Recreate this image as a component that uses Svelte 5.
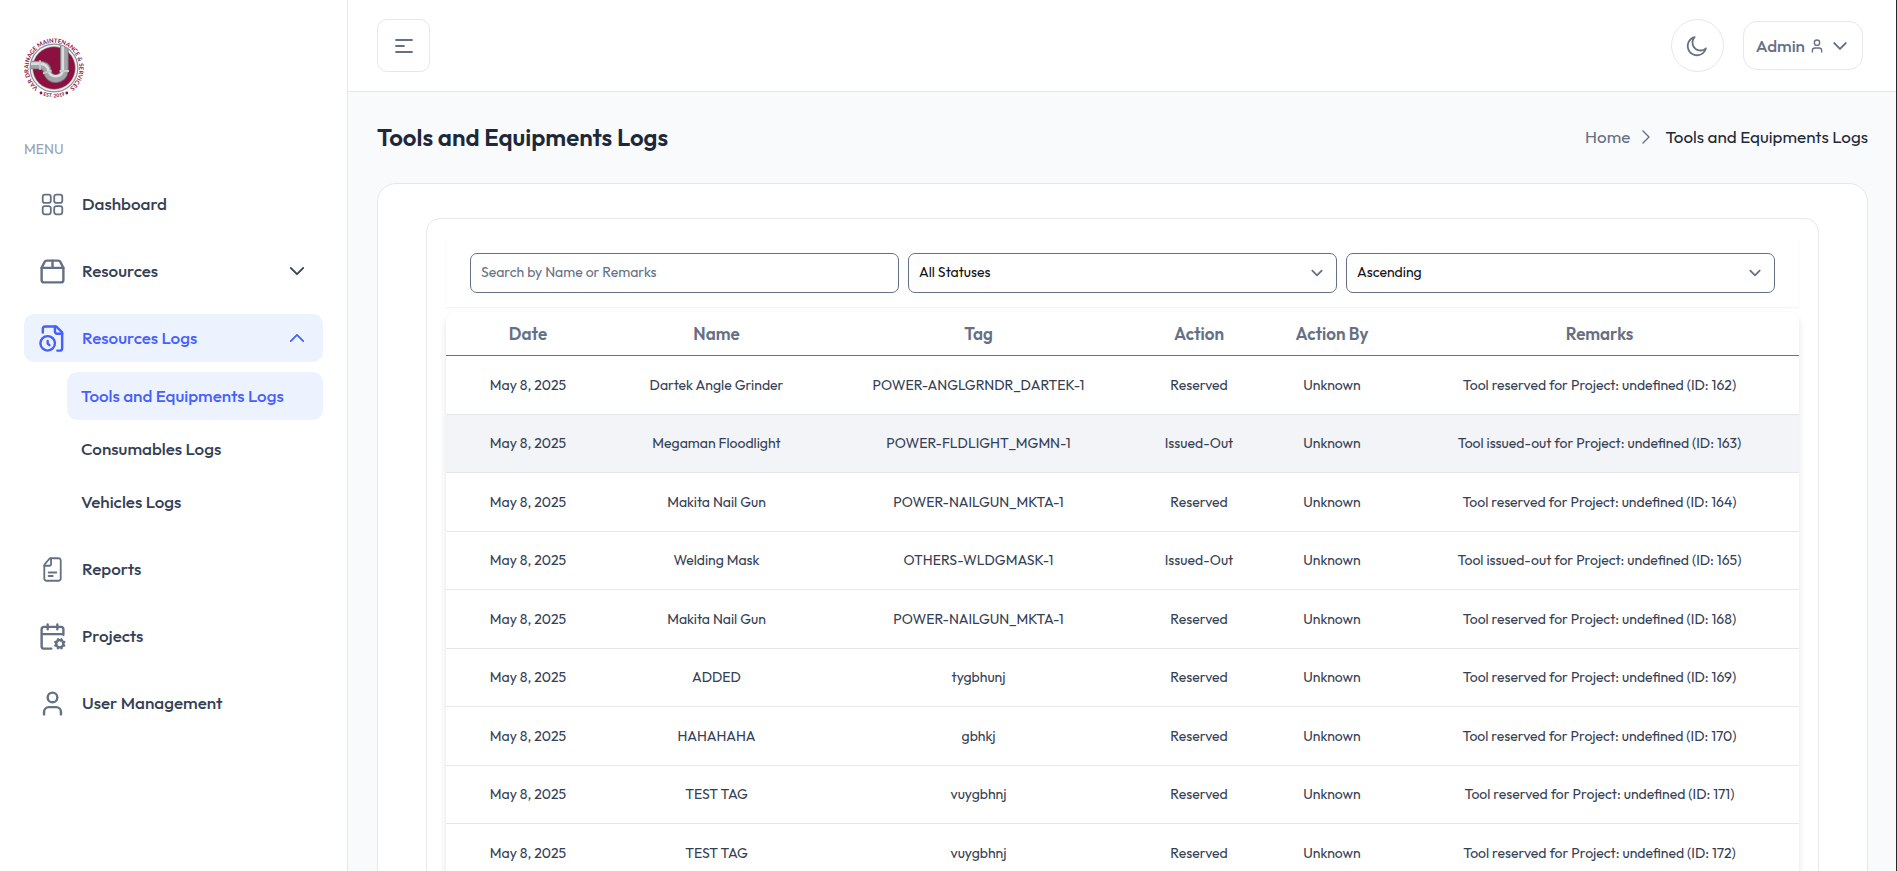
<script>
  let search = $state('');
  let status = $state('all');
  let order = $state('asc');

  const logs = [
    ['Dartek Angle Grinder', 'POWER-ANGLGRNDR_DARTEK-1', 'Reserved', 'Tool reserved for Project: undefined (ID: 162)'],
    ['Megaman Floodlight', 'POWER-FLDLIGHT_MGMN-1', 'Issued-Out', 'Tool issued-out for Project: undefined (ID: 163)'],
    ['Makita Nail Gun', 'POWER-NAILGUN_MKTA-1', 'Reserved', 'Tool reserved for Project: undefined (ID: 164)'],
    ['Welding Mask', 'OTHERS-WLDGMASK-1', 'Issued-Out', 'Tool issued-out for Project: undefined (ID: 165)'],
    ['Makita Nail Gun', 'POWER-NAILGUN_MKTA-1', 'Reserved', 'Tool reserved for Project: undefined (ID: 168)'],
    ['ADDED', 'tygbhunj', 'Reserved', 'Tool reserved for Project: undefined (ID: 169)'],
    ['HAHAHAHA', 'gbhkj', 'Reserved', 'Tool reserved for Project: undefined (ID: 170)'],
    ['TEST TAG', 'vuygbhnj', 'Reserved', 'Tool reserved for Project: undefined (ID: 171)'],
    ['TEST TAG', 'vuygbhnj', 'Reserved', 'Tool reserved for Project: undefined (ID: 172)']
  ];
</script>

{#snippet chevron()}
  <svg class="chevron" viewBox="0 0 20 20" aria-hidden="true"><path d="M4.8 7.4 10 12.6 15.2 7.4" /></svg>
{/snippet}

<div class="app">
  <aside class="sidebar">
    <a class="logo" href="#home" aria-label="VAR Drainage Maintenance & Services">
      <svg viewBox="0 0 60 60">
        <defs>
          <path id="ring-top" d="M14.5 50A25.3 25.3 0 1 1 45.5 50" />
          <path id="ring-bottom" d="M12 53.2A29.3 29.3 0 0 0 48 53.2" />
          <clipPath id="disc"><circle cx="30" cy="30" r="23.5" /></clipPath>
        </defs>
        <circle cx="30" cy="30" r="23.8" fill="#f4f4f4" stroke="#8d8f92" stroke-width="1.2" />
        <circle cx="30" cy="30" r="21.4" fill="#8c1040" stroke="#b9babd" stroke-width="0.6" />
        <g clip-path="url(#disc)" fill="none">
          <path d="M40.3 6V33A8.6 8.8 0 0 1 23.4 34Q23 27 15 27H5" stroke="#77797c" stroke-width="8.6" />
          <path d="M40.3 6V33A8.6 8.8 0 0 1 23.4 34Q23 27 15 27H5" stroke="#a3a5a8" stroke-width="6.8" />
          <path d="M38.8 6V33A7.4 7.4 0 0 1 24.6 33Q23.5 25.6 15 25.6H5" stroke="#dcdddf" stroke-width="2.6" />
          <path d="M35.6 33H45M19 35.4 27.6 32.6M16 22.2V31.8" stroke="#c9cacc" stroke-width="1.8" />
        </g>
        <text class="logo-text"><textPath href="#ring-top" startOffset="50%" text-anchor="middle">VAR DRAINAGE MAINTENANCE &amp; SERVICES</textPath></text>
        <text class="logo-year"><textPath href="#ring-bottom" startOffset="50%" text-anchor="middle">EST. 2019</textPath></text>
        <circle cx="17" cy="55" r="1.4" fill="#8c1040" />
        <circle cx="42.8" cy="55" r="1.4" fill="#8c1040" />
      </svg>
    </a>
    <h2 class="menu-title">MENU</h2>
    <nav class="menu">
      <a class="item" href="#dashboard">
        <svg class="icon thin" viewBox="0 0 24 24"><rect x="3.9" y="3.9" width="6.7" height="6.7" rx="1.8" /><rect x="13.4" y="3.9" width="6.7" height="6.7" rx="1.8" /><rect x="3.9" y="13.4" width="6.7" height="6.7" rx="1.8" /><rect x="13.4" y="13.4" width="6.7" height="6.7" rx="1.8" /></svg>
        <span>Dashboard</span>
      </a>
      <button class="item" type="button">
        <svg class="icon" viewBox="0 0 24 24"><path d="M3 9h18v10a2 2 0 0 1-2 2H5a2 2 0 0 1-2-2V9Z" /><path d="m3 9 2.45-4.9A2 2 0 0 1 7.24 3h9.52a2 2 0 0 1 1.8 1.1L21 9" /><path d="M12 3v6" /></svg>
        <span>Resources</span>
        {@render chevron()}
      </button>
      <div class="group">
        <button class="item active open" type="button" aria-expanded="true">
          <svg class="icon" viewBox="0 0 24 24"><path d="M16 22h2a2 2 0 0 0 2-2V7l-5-5H6a2 2 0 0 0-2 2v3" /><path d="M14 2v4a2 2 0 0 0 2 2h4" /><circle cx="8" cy="16" r="6" /><path d="M9.5 17.5 8 16.25V14" /></svg>
          <span>Resources Logs</span>
          {@render chevron()}
        </button>
        <div class="submenu">
          <a class="item active" href="#tools">Tools and Equipments Logs</a>
          <a class="item" href="#consumables">Consumables Logs</a>
          <a class="item" href="#vehicles">Vehicles Logs</a>
        </div>
      </div>
      <a class="item" href="#reports">
        <svg class="icon thin" viewBox="0 0 24 24"><path d="M10.6 2.7H17a1.8 1.8 0 0 1 1.8 1.8v15a1.8 1.8 0 0 1-1.8 1.8H7a1.8 1.8 0 0 1-1.8-1.8V8.7a2 2 0 0 1 .6-1.4l3.5-4a2 2 0 0 1 1.3-.6Z" /><path d="M5.4 8.9h3.9a1.5 1.5 0 0 0 1.5-1.5V2.9M8.8 14.5h6.4M8.8 17.4h3.4" /></svg>
        <span>Reports</span>
      </a>
      <a class="item" href="#projects">
        <svg class="icon" viewBox="0 0 24 24"><path d="m15.2 16.9-.9-.4M15.2 19.1l-.9.4M16 2v4M16.9 15.2l-.4-.9M16.9 20.8l-.4.9M19.5 14.3l-.4.9M19.5 21.7l-.4-.9M21 10.5V6a2 2 0 0 0-2-2H5a2 2 0 0 0-2 2v14a2 2 0 0 0 2 2h6M21.7 16.5l-.9.4M21.7 19.5l-.9-.4M3 10h18M8 2v4" /><circle cx="18" cy="18" r="3" /></svg>
        <span>Projects</span>
      </a>
      <a class="item" href="#users">
        <svg class="icon" viewBox="0 0 24 24"><path d="M19 21v-2a4 4 0 0 0-4-4H9a4 4 0 0 0-4 4v2" /><circle cx="12" cy="7" r="4" /></svg>
        <span>User Management</span>
      </a>
    </nav>
  </aside>

  <div class="page">
    <header class="topbar">
      <button class="toggle" type="button" aria-label="Toggle sidebar">
        <svg viewBox="0 0 18 14"><path d="M1 1h16M1 7h8M1 13h16" /></svg>
      </button>
      <div class="actions">
        <button class="theme" type="button" aria-label="Toggle dark mode">
          <svg viewBox="0 0 20 20"><path d="M17.4547 11.97L18.1799 12.1611C18.265 11.8383 18.1265 11.4982 17.8401 11.3266C17.5538 11.1551 17.1885 11.1934 16.944 11.4207L17.4547 11.97ZM8.0306 2.5459L8.57989 3.05657C8.80718 2.81209 8.84554 2.44682 8.67398 2.16046C8.50243 1.8741 8.16227 1.73559 7.83948 1.82066L8.0306 2.5459ZM12.9154 13.0035C9.64678 13.0035 6.99707 10.3538 6.99707 7.08524H5.49707C5.49707 11.1823 8.81835 14.5035 12.9154 14.5035V13.0035ZM16.944 11.4207C15.8869 12.4035 14.4721 13.0035 12.9154 13.0035V14.5035C14.8657 14.5035 16.6392 13.7492 17.9654 12.5193L16.944 11.4207ZM16.7295 11.7789C15.9437 14.7607 13.2277 16.9586 10.0003 16.9586V18.4586C13.9257 18.4586 17.2249 15.7853 18.1799 12.1611L16.7295 11.7789ZM10.0003 16.9586C6.15734 16.9586 3.04199 13.8433 3.04199 10.0003H1.54199C1.54199 14.6717 5.32892 18.4586 10.0003 18.4586V16.9586ZM3.04199 10.0003C3.04199 6.77289 5.23988 4.05695 8.22173 3.27114L7.83948 1.82066C4.21532 2.77574 1.54199 6.07486 1.54199 10.0003H3.04199ZM6.99707 7.08524C6.99707 5.52854 7.5971 4.11366 8.57989 3.05657L7.48132 2.03522C6.25073 3.36104 5.49707 5.13454 5.49707 7.08524H6.99707Z" /></svg>
        </button>
        <button class="account" type="button">
          <span>Admin</span>
          <svg class="person" viewBox="0 0 24 24"><path d="M19 21v-2a4 4 0 0 0-4-4H9a4 4 0 0 0-4 4v2" /><circle cx="12" cy="7" r="4" /></svg>
          {@render chevron()}
        </button>
      </div>
    </header>

    <main class="content">
      <div class="heading">
        <h1>Tools and Equipments Logs</h1>
        <nav class="crumbs" aria-label="Breadcrumb">
          <a href="#home">Home</a>
          <svg viewBox="0 0 8 14" aria-hidden="true"><path d="m1 1 6 6-6 6" /></svg>
          <span>Tools and Equipments Logs</span>
        </nav>
      </div>

      <section class="card">
        <div class="panel">
          <form class="filters">
            <input type="text" placeholder="Search by Name or Remarks" aria-label="Search by Name or Remarks" bind:value={search} />
            <div class="select">
              <select aria-label="Status" bind:value={status}>
                <option value="all">All Statuses</option>
                <option value="reserved">Reserved</option>
                <option value="issued">Issued-Out</option>
              </select>
              {@render chevron()}
            </div>
            <div class="select">
              <select aria-label="Sort order" bind:value={order}>
                <option value="asc">Ascending</option>
                <option value="desc">Descending</option>
              </select>
              {@render chevron()}
            </div>
          </form>
          <table>
            <colgroup>
              <col class="c-date" /><col class="c-name" /><col class="c-tag" /><col class="c-action" /><col class="c-by" /><col class="c-remarks" />
            </colgroup>
            <thead>
              <tr><th>Date</th><th>Name</th><th>Tag</th><th>Action</th><th>Action By</th><th>Remarks</th></tr>
            </thead>
            <tbody>
              {#each logs as [name, tag, action, remarks], i}
                <tr class:highlight={i === 1}>
                  <td>May 8, 2025</td><td>{name}</td><td>{tag}</td><td>{action}</td><td>Unknown</td><td>{remarks}</td>
                </tr>
              {/each}
            </tbody>
          </table>
        </div>
      </section>
    </main>
  </div>
</div>

<style>
  :global(body) {
    margin: 0;
  }
  .app,
  .app * {
    box-sizing: border-box;
  }
  .app {
    display: flex;
    height: 100vh;
    overflow: hidden;
    border-right: 1px solid #26282c;
    background: #f9fafb;
    color: #344054;
    font-family: Outfit, Lato, sans-serif;
    font-size: 17px;
    line-height: 24px;
  }
  button,
  input,
  select {
    margin: 0;
    font: inherit;
    color: inherit;
  }
  button {
    cursor: pointer;
  }
  a {
    color: inherit;
    text-decoration: none;
  }
  svg {
    display: block;
    flex: none;
    fill: none;
    stroke: currentColor;
    stroke-linecap: round;
    stroke-linejoin: round;
  }
  .sidebar {
    flex: none;
    width: 348px;
    padding: 38px 24px 0;
    background: #fff;
    border-right: 1px solid #e4e7ec;
  }
  .logo {
    display: block;
    width: 60px;
  }
  .logo svg {
    width: 60px;
    height: 60px;
    overflow: visible;
    stroke: none;
    stroke-linecap: butt;
  }
  .logo-text,
  .logo-year {
    fill: #8c1040;
    font-family: Lato, sans-serif;
    font-weight: 700;
    font-size: 6px;
  }
  .logo-year {
    font-size: 5px;
  }
  .menu-title {
    margin: 39px 0 19px;
    font-size: 14px;
    line-height: 24px;
    font-weight: 400;
    color: #98a2b3;
  }
  .menu {
    display: flex;
    flex-direction: column;
    gap: 19px;
  }
  .item {
    display: flex;
    align-items: center;
    gap: 15px;
    width: 100%;
    height: 48px;
    padding: 0 14px;
    border: 0;
    border-radius: 10px;
    background: none;
    font-weight: 500;
    text-align: left;
  }
  .item .chevron {
    margin-left: auto;
  }
  .icon {
    width: 29px;
    height: 29px;
    color: #667085;
    stroke-width: 2;
  }
  .icon.thin {
    stroke-width: 1.5;
  }
  .chevron {
    width: 24px;
    height: 24px;
    stroke-width: 1.5;
  }
  .active {
    background: #ecf3ff;
    color: #465fff;
  }
  .active .icon {
    color: inherit;
  }
  .open .chevron {
    transform: rotate(180deg);
  }
  .submenu {
    display: flex;
    flex-direction: column;
    gap: 5px;
    margin: 10px 0 0 43px;
  }
  .submenu .item {
    width: auto;
  }
  .page {
    flex: 1;
    min-width: 0;
  }
  .topbar {
    display: flex;
    align-items: center;
    justify-content: space-between;
    height: 92px;
    padding: 0 33px 0 29px;
    background: #fff;
    border-bottom: 1px solid #e4e7ec;
    color: #667085;
  }
  .toggle,
  .theme,
  .account {
    display: flex;
    align-items: center;
    justify-content: center;
    border: 1px solid #e4e7ec;
    background: #fff;
  }
  .toggle,
  .theme {
    width: 53px;
    height: 53px;
    padding: 0;
    border-radius: 10px;
  }
  .toggle svg {
    width: 18px;
    height: 14px;
    stroke-width: 1.8;
  }
  .theme {
    border-radius: 50%;
  }
  .theme svg {
    width: 24px;
    height: 24px;
    fill: currentColor;
    stroke: none;
  }
  .actions {
    display: flex;
    align-items: center;
    gap: 19px;
  }
  .account {
    height: 49px;
    padding: 0 11px 0 12px;
    border-radius: 14px;
    font-weight: 500;
  }
  .person {
    width: 16px;
    height: 16px;
    margin: 0 4px;
    stroke-width: 2;
  }
  .account .chevron {
    width: 22px;
    height: 22px;
    stroke-width: 1.8;
  }
  .content {
    padding: 29px 28px 29px 29px;
  }
  .heading {
    display: flex;
    align-items: center;
    justify-content: space-between;
    height: 32px;
    margin-bottom: 30px;
  }
  h1 {
    margin: 0;
    font-size: 24px;
    line-height: 32px;
    font-weight: 600;
    color: #1d2939;
  }
  .crumbs {
    display: flex;
    align-items: center;
    color: #667085;
  }
  .crumbs svg {
    width: 8px;
    height: 14px;
    margin: 0 15px 0 12px;
    stroke-width: 1.4;
  }
  .crumbs span {
    color: #1d2939;
  }
  .card {
    padding: 34px 48px;
    background: #fff;
    border: 1px solid #e4e7ec;
    border-radius: 19px;
  }
  .panel {
    padding: 19px;
    border: 1px solid #e4e7ec;
    border-radius: 14px;
  }
  .filters {
    display: grid;
    grid-template-columns: repeat(3, 1fr);
    gap: 9px;
    padding: 15px 24px 14px;
    box-shadow: 0 1px 2px rgb(16 24 40 / 6%);
    font-size: 14px;
  }
  .filters input,
  .filters select {
    width: 100%;
    height: 40px;
    padding: 0 10px 2px;
    border: 1px solid #667085;
    border-radius: 7px;
    background: #fff;
    color: #101010;
    appearance: none;
  }
  .filters input::placeholder {
    color: #667085;
    opacity: 1;
  }
  .select {
    display: grid;
    align-items: center;
  }
  .select select,
  .select .chevron {
    grid-area: 1 / 1;
  }
  .select .chevron {
    justify-self: end;
    width: 18px;
    height: 18px;
    margin-right: 11px;
    color: #667085;
    stroke-width: 2;
    pointer-events: none;
  }
  table {
    width: 100%;
    margin-top: 5px;
    table-layout: fixed;
    border-collapse: separate;
    border-spacing: 0;
    border-radius: 10px 10px 0 0;
    box-shadow: 0 4px 7px rgb(16 24 40 / 12%);
    text-align: center;
    background: #fff;
  }
  .c-date { width: 164px; }
  .c-name { width: 213px; }
  .c-tag { width: 311px; }
  .c-action { width: 130px; }
  .c-by { width: 136px; }
  .c-remarks { width: 399px; }
  th {
    height: 44px;
    padding: 0;
    border-bottom: 1px solid #667085;
    color: #667085;
    font-weight: 600;
  }
  td {
    height: 59px;
    padding: 0 0 1px;
    border-bottom: 1px solid #e4e7ec;
    font-size: 14px;
  }
  tr:nth-child(even) td {
    height: 58px;
  }
  .highlight {
    background: #f2f4f7;
  }
</style>
